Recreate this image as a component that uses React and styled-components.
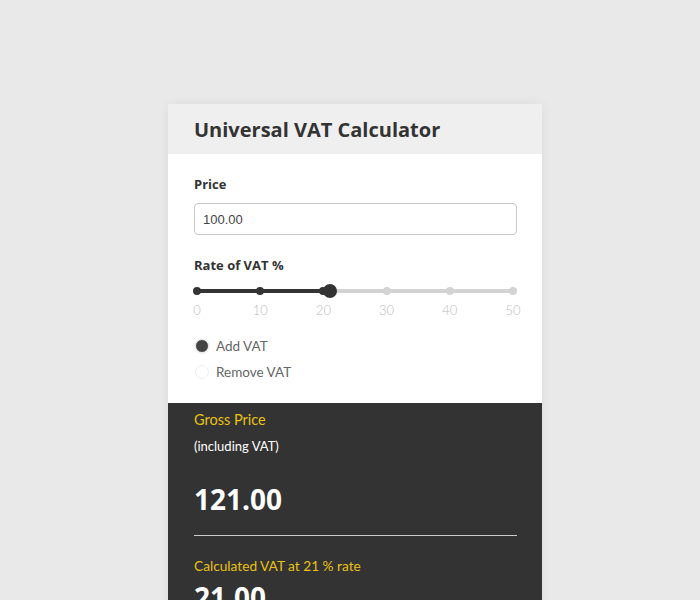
import React, { useState } from "react";
import styled, { createGlobalStyle } from "styled-components";

const Global = createGlobalStyle`
  html, body { margin: 0; padding: 0; background: #e9e9e9; height: 600px; overflow: hidden; }
  body { font-family: "Open Sans", sans-serif; }
`;

const Page = styled.div`
  padding: 104px 0 0 168px;
`;

const Card = styled.div`
  width: 374px;
  box-shadow: 0 0 12px rgba(0,0,0,0.06);
`;

const Header = styled.div`
  background: #efefef;
  height: 50px;
  padding: 0 26px;
  display: flex;
  align-items: center;
`;

const Title = styled.h1`
  margin: 0;
  font-family: "Open Sans", sans-serif;
  font-weight: 700;
  font-size: 20px;
  color: #333;
`;

const Body = styled.div`
  background: #fff;
  padding: 21px 25px 23px 26px;
`;

const Label = styled.div`
  font-family: "Open Sans", sans-serif;
  font-weight: 700;
  font-size: 13px;
  color: #333;
  margin-bottom: ${p => p.$mb || 10}px;
`;

const Input = styled.input`
  box-sizing: border-box;
  width: 100%;
  height: 32px;
  border: 1px solid #c8c8c8;
  border-radius: 4px;
  padding: 0 8px;
  font-family: "Liberation Sans", Arial, sans-serif;
  font-size: 13px;
  color: #444;
  outline: none;
  margin-bottom: 21px;
`;

const SliderWrap = styled.div`
  position: relative;
  margin: 0 4px 0 3px;
  height: 14px;
`;

const Track = styled.div`
  position: absolute;
  left: 0; right: 0; top: 5px;
  height: 4px;
  background: #d3d3d3;
  border-radius: 2px;
`;

const Fill = styled.div`
  position: absolute;
  left: 0; top: 5px;
  height: 4px;
  background: #333;
  border-radius: 2px;
`;

const Dot = styled.div`
  position: absolute;
  top: 3px;
  width: 8px; height: 8px;
  margin-left: -4px;
  border-radius: 50%;
  background: ${p => (p.$on ? "#333" : "#d3d3d3")};
`;

const Knob = styled.div`
  position: absolute;
  top: 0;
  width: 14px; height: 14px;
  margin-left: -7px;
  border-radius: 50%;
  background: #333;
`;

const Ticks = styled.div`
  position: relative;
  margin: 0 4px 0 3px;
  height: 25px;
`;

const Tick = styled.span`
  position: absolute;
  top: 4px;
  transform: translateX(-50%);
  font-family: Lato, sans-serif;
  font-weight: 300;
  font-size: 13px;
  color: #bdbdbd;
`;

const Radios = styled.div`
  display: flex;
  flex-direction: column;
  gap: 10px;
  margin-top: 15px;
`;

const RadioRow = styled.label`
  display: flex;
  align-items: center;
  gap: 7px;
  font-family: Lato, sans-serif;
  font-size: 13.5px;
  color: #666;
  cursor: pointer;
`;

const RadioCircle = styled.span`
  width: 14px; height: 14px;
  border-radius: 50%;
  box-sizing: border-box;
  background: ${p => (p.$on ? "#444" : "#fff")};
  border: 1px solid ${p => (p.$on ? "#f2f2f2" : "#eee")};
  box-shadow: 0 0 0 1px ${p => (p.$on ? "#f4f4f4" : "transparent")};
  margin-left: 1px;
`;

const Dark = styled.div`
  background: #333;
  padding: 8px 25px 40px 26px;
`;

const Gold = styled.div`
  font-family: Lato, sans-serif;
  font-size: ${p => p.$size || 14.5}px;
  color: #e9c214;
`;

const Sub = styled.div`
  font-family: Lato, sans-serif;
  font-size: 13px;
  color: #fff;
  margin-top: 10px;
`;

const Big = styled.div`
  font-family: "Open Sans", sans-serif;
  font-weight: 700;
  font-size: 28px;
  color: #fff;
  margin-top: ${p => p.$mt || 24}px;
`;

const Rule = styled.hr`
  border: none;
  border-top: 1px solid #ccc;
  margin: 17px 0 21px;
`;

export default function App() {
  const [mode, setMode] = useState("add");
  const rate = 21;
  const max = 50;
  const ticks = [0, 10, 20, 30, 40, 50];
  const pct = (v) => `${(v / max) * 100}%`;
  return (
    <>
      <Global />
      <Page>
        <Card>
          <Header>
            <Title>Universal VAT Calculator</Title>
          </Header>
          <Body>
            <Label>Price</Label>
            <Input defaultValue="100.00" />
            <Label $mb={10}>Rate of VAT %</Label>
            <SliderWrap>
              <Track />
              <Fill style={{ width: pct(rate) }} />
              {ticks.map((t) => (
                <Dot key={t} $on={t <= rate} style={{ left: pct(t) }} />
              ))}
              <Knob style={{ left: pct(rate) }} />
            </SliderWrap>
            <Ticks>
              {ticks.map((t) => (
                <Tick key={t} style={{ left: pct(t) }}>{t}</Tick>
              ))}
            </Ticks>
            <Radios>
              <RadioRow onClick={() => setMode("add")}>
                <RadioCircle $on={mode === "add"} />
                Add VAT
              </RadioRow>
              <RadioRow onClick={() => setMode("remove")}>
                <RadioCircle $on={mode === "remove"} />
                Remove VAT
              </RadioRow>
            </Radios>
          </Body>
          <Dark>
            <Gold>Gross Price</Gold>
            <Sub>(including VAT)</Sub>
            <Big $mt={26}>121.00</Big>
            <Rule />
            <Gold $size={13.7}>Calculated VAT at 21 % rate</Gold>
            <Big $mt={4}>21.00</Big>
          </Dark>
        </Card>
      </Page>
    </>
  );
}
